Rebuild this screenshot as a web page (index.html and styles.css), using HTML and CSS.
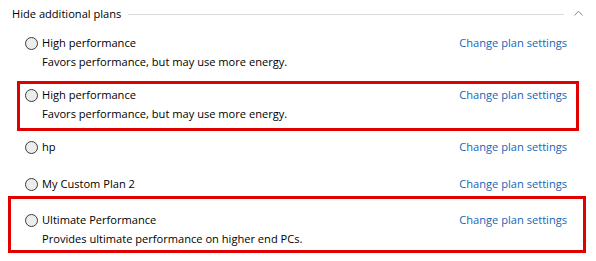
FILE: index.html
```html
<!DOCTYPE html>
<html lang="en">
<head>
<meta charset="utf-8">
<title>Power plans</title>
<link rel="stylesheet" href="styles.css">
</head>
<body>
<div class="page">
  <div class="header">
    <span class="header-label">Hide additional plans</span>
    <span class="rule"></span>
    <svg class="chevron" width="9" height="6" viewBox="0 0 9 6"><path d="M0.5 5.5 L4.5 1.2 L8.5 5.5" fill="none" stroke="#8a8a8a" stroke-width="1"/></svg>
  </div>
  <div class="plans">
    <div class="plan tall">
      <span class="radio"></span>
      <span class="title">High performance</span>
      <a class="link">Change plan settings</a>
      <span class="desc">Favors performance, but may use more energy.</span>
    </div>
    <div class="plan tall marked mark-a">
      <span class="radio"></span>
      <span class="title">High performance</span>
      <a class="link">Change plan settings</a>
      <span class="desc">Favors performance, but may use more energy.</span>
    </div>
    <div class="plan short">
      <span class="radio"></span>
      <span class="title">hp</span>
      <a class="link">Change plan settings</a>
    </div>
    <div class="plan short2">
      <span class="radio"></span>
      <span class="title">My Custom Plan 2</span>
      <a class="link">Change plan settings</a>
    </div>
    <div class="plan tall marked mark-b">
      <span class="radio"></span>
      <span class="title">Ultimate Performance</span>
      <a class="link">Change plan settings</a>
      <span class="desc">Provides ultimate performance on higher end PCs.</span>
    </div>
  </div>
</div>
</body>
</html>
```

FILE: styles.css
```css
html, body {
  margin: 0;
  background: #ffffff;
}
body {
  font-family: "Open Sans", "Noto Sans", sans-serif;
  font-size: 11.1px;
  color: #000000;
  width: 596px;
  height: 261px;
  overflow: hidden;
}
.page {
  padding: 5px 13px 0 12px;
}
.header {
  display: flex;
  align-items: center;
  height: 18px;
}
.header-label {
  line-height: 18px;
  white-space: nowrap;
}
.rule {
  flex: 1;
  height: 1px;
  background: #dadada;
  margin: 0 10px 0 7px;
}
.chevron {
  display: block;
  margin-top: -3px;
}
.plans {
  margin-top: 11px;
  padding: 0 16px 0 13px;
}
.plan {
  display: grid;
  grid-template-columns: 13px 1fr auto;
  grid-template-rows: 18px 19px;
  column-gap: 4px;
  align-content: start;
}
.plan.tall { height: 52px; }
.plan.short { height: 37px; }
.plan.short2 { height: 36px; }
.radio {
  grid-column: 1;
  grid-row: 1;
  align-self: center;
  width: 11px;
  height: 11px;
  border: 1px solid #3a3a3a;
  border-radius: 50%;
  background: #ececec;
}
.title {
  grid-column: 2;
  grid-row: 1;
  line-height: 18px;
}
.link {
  grid-column: 3;
  grid-row: 1;
  line-height: 18px;
  color: #1464b8;
  cursor: pointer;
}
.desc {
  grid-column: 2 / 4;
  grid-row: 2;
  line-height: 19px;
}
.plan.marked {
  position: relative;
}
.plan.marked::after {
  content: "";
  position: absolute;
  border: 3px solid #e00000;
  pointer-events: none;
}
.mark-a::after {
  top: -5px;
  left: -8px;
  right: -12px;
  height: 44px;
}
.mark-b::after {
  top: -15px;
  left: -17px;
  right: -19px;
  height: 51px;
}
```
